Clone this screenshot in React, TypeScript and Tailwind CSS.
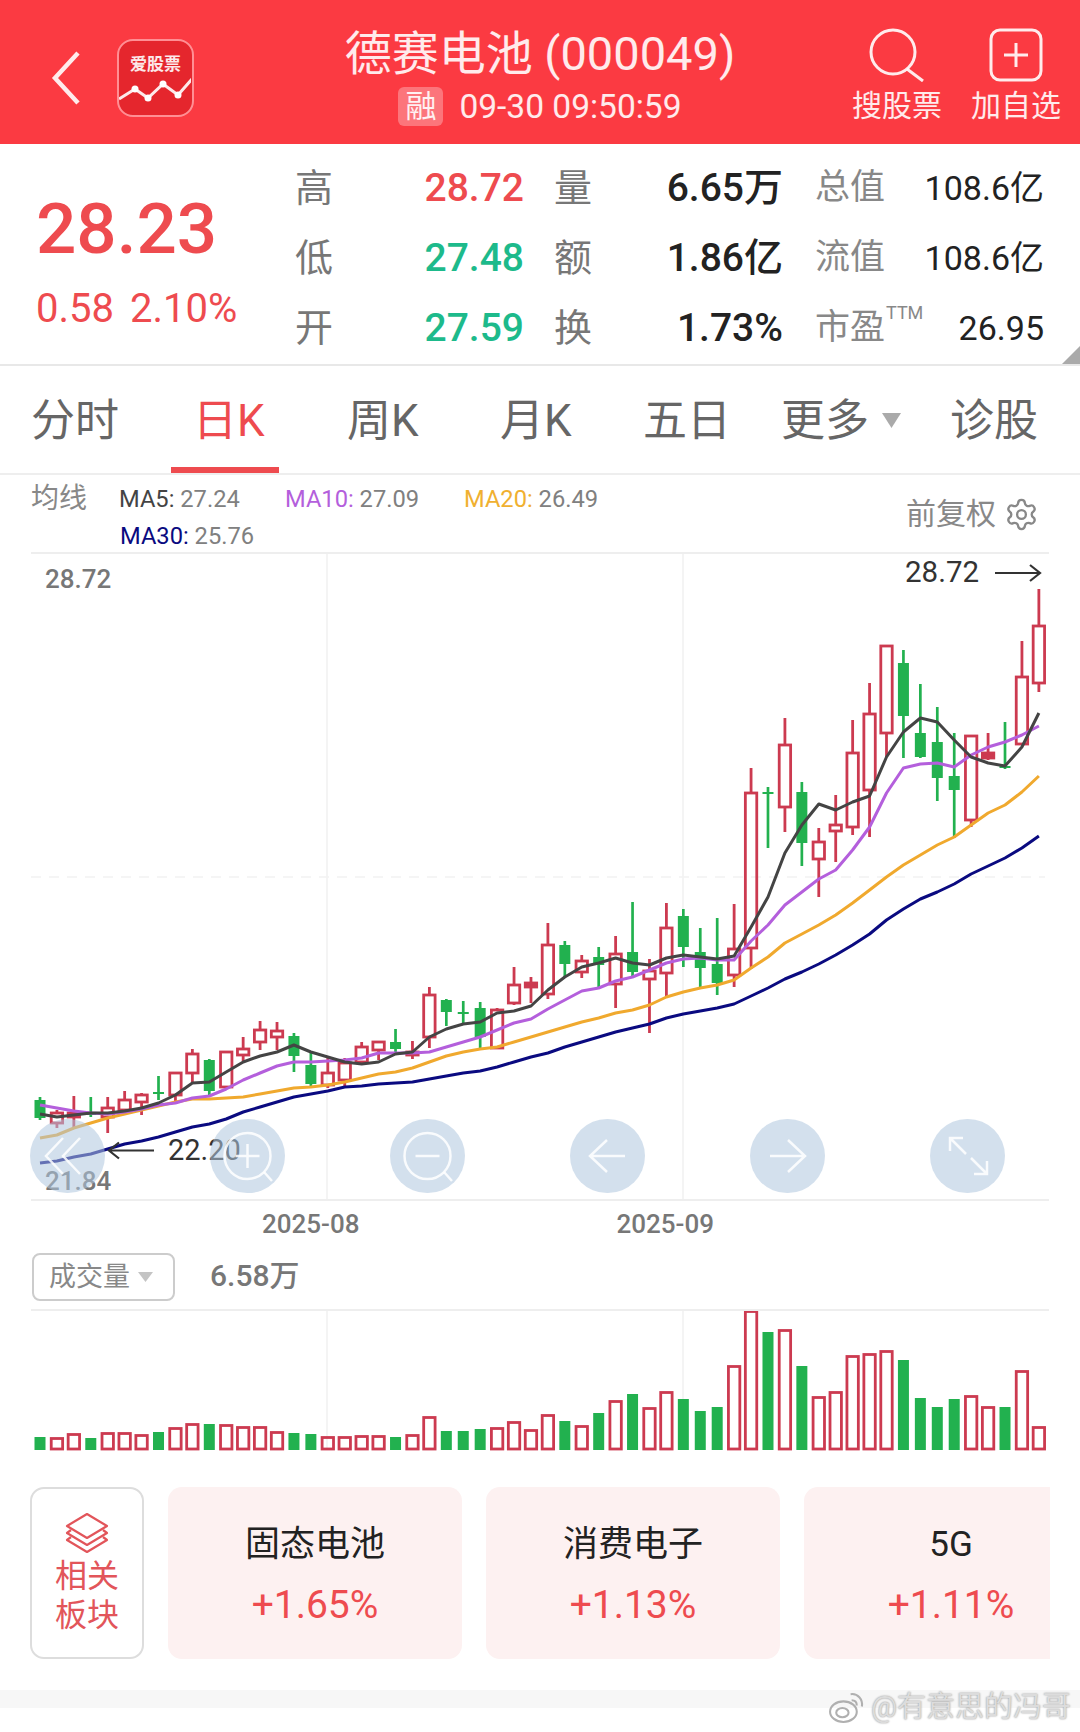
import { Settings } from 'lucide-react';

type Candle = [number, number, number, number];

const RED = '#cc3a50';
const GREEN = '#22b14f';

// [high, bodyTop, bodyBottom, low]
const candles: Candle[] = [
  [1097, 1100, 1118, 1120], [1110, 1113, 1123, 1128], [1096, 1113, 1117, 1128], [1097, 1113, 1114, 1117],
  [1097, 1108, 1117, 1133], [1091, 1100, 1110, 1113], [1093, 1095, 1102, 1115], [1076, 1092, 1093, 1100],
  [1073, 1073, 1095, 1102], [1049, 1054, 1073, 1083], [1059, 1060, 1091, 1095], [1052, 1052, 1087, 1088],
  [1037, 1049, 1055, 1061], [1021, 1030, 1042, 1050], [1022, 1031, 1037, 1050], [1033, 1036, 1056, 1072],
  [1052, 1065, 1084, 1088], [1058, 1073, 1085, 1088], [1058, 1063, 1080, 1087], [1042, 1047, 1062, 1063],
  [1041, 1042, 1050, 1060], [1029, 1042, 1049, 1055], [1041, 1052, 1055, 1059], [987, 995, 1037, 1048],
  [999, 1000, 1012, 1026], [1001, 1012, 1013, 1023], [1002, 1008, 1037, 1048], [1008, 1010, 1048, 1048],
  [967, 985, 1003, 1005], [977, 983, 987, 1003], [923, 945, 994, 999], [941, 945, 964, 977],
  [955, 961, 972, 978], [947, 957, 965, 987], [936, 954, 984, 1008], [902, 952, 972, 977],
  [959, 971, 979, 1033], [903, 928, 973, 996], [909, 916, 947, 967], [928, 952, 968, 989],
  [918, 964, 983, 995], [904, 949, 975, 987], [768, 793, 948, 969], [787, 792, 794, 848],
  [718, 745, 807, 832], [782, 792, 843, 866], [828, 842, 859, 897], [795, 825, 831, 862],
  [720, 753, 827, 835], [683, 714, 790, 837], [646, 646, 733, 757], [650, 663, 716, 758],
  [684, 733, 757, 758], [707, 742, 778, 801], [733, 776, 790, 838], [736, 736, 820, 827],
  [733, 753, 758, 760], [722, 766, 768, 769], [641, 677, 744, 745], [589, 626, 683, 692],
];

// indexes of the falling days, drawn as solid green
const greenDays = new Set([0, 3, 7, 10, 15, 16, 21, 24, 25, 26, 31, 33, 35, 38, 39, 40, 43, 45, 51, 52, 53, 54, 57]);

const ma5 = [
  1114, 1117, 1115, 1113, 1113, 1111, 1108, 1103, 1095, 1083, 1082, 1072, 1062, 1056, 1052, 1045, 1052, 1057, 1062, 1064,
  1062, 1054, 1052, 1037, 1029, 1024, 1022, 1013, 1011, 1006, 990, 977, 967, 963, 958, 963, 965, 958, 955, 957,
  959, 956, 927, 897, 853, 825, 804, 810, 802, 796, 757, 732, 718, 722, 740, 757, 763, 766, 747, 713,
];
const ma10 = [
  1105, 1108, 1111, 1113, 1114, 1112, 1109, 1105, 1103, 1098, 1096, 1089, 1080, 1073, 1066, 1062, 1062, 1061, 1060, 1058,
  1053, 1053, 1053, 1052, 1047, 1042, 1037, 1030, 1023, 1019, 1009, 1000, 991, 988, 981, 977, 970, 963, 959, 958,
  960, 960, 941, 925, 905, 892, 879, 870, 850, 827, 793, 768, 764, 763, 767, 755, 747, 742, 735, 726,
];
const ma20 = [
  1138, 1135, 1128, 1123, 1118, 1114, 1110, 1106, 1102, 1099, 1099, 1098, 1097, 1094, 1091, 1088, 1087, 1085, 1082, 1078,
  1074, 1072, 1068, 1062, 1056, 1052, 1049, 1047, 1042, 1037, 1032, 1027, 1022, 1018, 1013, 1010, 1005, 997, 992, 988,
  985, 980, 968, 957, 943, 934, 925, 915, 903, 890, 877, 865, 855, 845, 837, 825, 813, 805, 792, 776,
];
const ma30 = [
  1163, 1161, 1157, 1154, 1149, 1144, 1141, 1137, 1132, 1127, 1124, 1119, 1112, 1107, 1102, 1097, 1094, 1091, 1087, 1086,
  1084, 1083, 1082, 1079, 1076, 1073, 1071, 1067, 1062, 1057, 1053, 1047, 1042, 1037, 1032, 1028, 1024, 1018, 1014, 1011,
  1008, 1004, 996, 988, 979, 972, 964, 955, 945, 934, 920, 909, 899, 892, 884, 874, 866, 858, 848, 836,
];

// top of each volume bar, they all stand on y=1450
const volumes = [
  1437, 1438, 1434, 1438, 1433, 1433, 1435, 1432, 1428, 1424, 1424, 1425, 1427, 1427, 1432, 1433, 1434, 1437, 1437, 1436,
  1436, 1437, 1435, 1417, 1431, 1431, 1429, 1428, 1422, 1430, 1415, 1421, 1426, 1413, 1401, 1394, 1408, 1392, 1399, 1411,
  1407, 1366, 1311, 1332, 1330, 1366, 1397, 1392, 1356, 1354, 1351, 1360, 1398, 1407, 1399, 1396, 1407, 1407, 1371, 1427,
];

const xAt = (i: number) => 40 + i * 16.93;
const linePoints = (ys: number[]) => ys.map((y, i) => `${xAt(i).toFixed(1)},${y}`).join(' ');

function CandleChart() {
  return (
    <svg className="absolute inset-0" width="1080" height="647" viewBox="0 554 1080 647" fill="none">
      <path d="M327 554V1200M683 554V1200" stroke="#f1f1f1" strokeWidth="1.5" />
      <path d="M31 877H1045" stroke="#f2f2f2" strokeWidth="1.5" strokeDasharray="10 8" />
      {candles.map(([high, top, bottom, low], i) => {
        const x = xAt(i);
        if (greenDays.has(i)) {
          return (
            <g key={i}>
              <path d={`M${x} ${high}V${low}`} stroke={GREEN} strokeWidth="2.7" />
              <rect x={x - 5.5} y={top} width="11" height={Math.max(bottom - top, 2)} fill={GREEN} />
            </g>
          );
        }
        return (
          <g key={i} stroke={RED} strokeWidth="2.8">
            <path d={`M${x} ${high}V${top}M${x} ${bottom}V${low}`} />
            <rect x={x - 5.7} y={top} width="11.4" height={bottom - top} fill={bottom - top < 6 ? RED : 'none'} />
          </g>
        );
      })}
      <polyline points={linePoints(ma30)} stroke="#0a0a80" strokeWidth="3" strokeLinejoin="round" />
      <polyline points={linePoints(ma20)} stroke="#f0a92e" strokeWidth="3" strokeLinejoin="round" />
      <polyline points={linePoints(ma10)} stroke="#b45fdc" strokeWidth="3" strokeLinejoin="round" />
      <polyline points={linePoints(ma5)} stroke="#444444" strokeWidth="3" strokeLinejoin="round" />
      <path d="M995 573H1040M1030 565L1040 573L1030 581" stroke="#333333" strokeWidth="2.2" />
      <path d="M154 1150.5H109M119 1142.5L109 1150.5L119 1158.5" stroke="#333333" strokeWidth="2.2" />
    </svg>
  );
}

function VolumeChart() {
  return (
    <svg className="block" width="1080" height="149" viewBox="0 1311 1080 149" fill="none">
      <path d="M327 1311V1450M683 1311V1450" stroke="#f1f1f1" strokeWidth="1.5" />
      {volumes.map((top, i) => {
        const x = xAt(i);
        return greenDays.has(i) ? (
          <rect key={i} x={x - 5.5} y={top} width="11" height={1450 - top} fill={GREEN} />
        ) : (
          <rect key={i} x={x - 5.7} y={top + 0.5} width="11.4" height={1448.5 - top} stroke={RED} strokeWidth="2.8" />
        );
      })}
    </svg>
  );
}

function ChartButton({ children }: { children: React.ReactNode }) {
  return (
    <div className="w-[75px] h-[74px] rounded-full bg-[#afc6de]/55">
      <svg width="75" height="74" viewBox="0 0 75 74" fill="none" stroke="#ffffff" strokeOpacity="0.85" strokeWidth="2.5">
        {children}
      </svg>
    </div>
  );
}

function AppLogo() {
  return (
    <div className="relative w-[77px] h-[78px] rounded-[16px] border-[2.5px] border-[#ff8f94] bg-[#e5262d] overflow-hidden">
      <span className="absolute left-0 right-0 top-[12px] text-center text-[17px] leading-[22px] font-bold text-white/90">
        爱股票
      </span>
      <svg className="absolute inset-0" width="72" height="73" viewBox="0 0 72 73" fill="none">
        <path d="M0 58L16 48L29 57L44 43L59 54L73 38" stroke="#ffffff" strokeOpacity="0.9" strokeWidth="3" />
        <circle cx="16" cy="48" r="3.5" fill="#ffffff" />
        <circle cx="29" cy="57" r="3.5" fill="#ffffff" />
        <circle cx="44" cy="43" r="3.5" fill="#ffffff" />
        <circle cx="59" cy="54" r="3.5" fill="#ffffff" />
      </svg>
    </div>
  );
}

function Header() {
  return (
    <div className="grid grid-cols-[1fr_auto_1fr] h-[144px] bg-[#fb3a42] text-white/90">
      <div className="flex items-center pt-[11px]">
        <svg className="ml-[50px]" width="32" height="54" viewBox="0 0 32 54" fill="none">
          <path d="M28 2L5 27L28 52" stroke="#ffffff" strokeOpacity="0.9" strokeWidth="4.5" />
        </svg>
        <div className="ml-[35px]">
          <AppLogo />
        </div>
      </div>
      <div className="flex flex-col items-center pt-[24px]">
        <div className="text-[47px] leading-[60px] whitespace-nowrap">德赛电池 (000049)</div>
        <div className="flex items-center mt-[3px]">
          <span className="w-[45px] h-[39px] rounded-[6px] bg-white/30 text-[31px] leading-[39px] text-center">融</span>
          <span className="ml-[16px] text-[33.5px] leading-[39px] whitespace-nowrap">09-30 09:50:59</span>
        </div>
      </div>
      <div className="flex justify-end pr-[19px] pt-[28px]">
        <div className="flex flex-col items-center w-[90px]">
          <svg width="56" height="54" viewBox="0 0 56 54" fill="none" stroke="#ffffff" strokeOpacity="0.9" strokeWidth="3">
            <circle cx="24" cy="24" r="22" />
            <path d="M38 41L54 53" />
          </svg>
          <span className="mt-[8px] text-[30px] leading-[32px] whitespace-nowrap">搜股票</span>
        </div>
        <div className="flex flex-col items-center w-[90px] ml-[29px]">
          <svg width="54" height="54" viewBox="0 0 54 54" fill="none" stroke="#ffffff" strokeOpacity="0.9" strokeWidth="3">
            <rect x="2" y="2" width="50" height="50" rx="9" />
            <path d="M27 15V39M15 27H39" />
          </svg>
          <span className="mt-[8px] text-[30px] leading-[32px] whitespace-nowrap">加自选</span>
        </div>
      </div>
    </div>
  );
}

function StatRow({
  label1, value1, color1, label2, value2, label3, value3, ttm,
}: {
  label1: string; value1: string; color1: string; label2: string; value2: string; label3: string; value3: string; ttm?: boolean;
}) {
  return (
    <div className="flex items-center h-[70px]">
      <div className="flex justify-between items-center w-[229px]">
        <span className="text-[38px] text-[#777777]">{label1}</span>
        <span className={`text-[39px] font-medium ${color1}`}>{value1}</span>
      </div>
      <div className="flex justify-between items-center w-[229px] ml-[30px]">
        <span className="text-[38px] text-[#777777]">{label2}</span>
        <span className="text-[39px] font-medium text-[#222222]">{value2}</span>
      </div>
      <div className="flex justify-between items-center w-[229px] ml-[32px]">
        <span className="relative text-[35px] text-[#888888] whitespace-nowrap">
          {label3}
          {ttm && <sup className="absolute left-[71px] top-[-2px] text-[18px] leading-[26px]">TTM</sup>}
        </span>
        <span className="text-[34px] text-[#222222]">{value3}</span>
      </div>
    </div>
  );
}

function Stats() {
  return (
    <div className="relative flex h-[222px] pt-[9px] border-b-2 border-[#e8e8e8]">
      <div className="w-[295px] pl-[36px] text-[#ee4b4f]">
        <div className="text-[71px] leading-[86px] font-medium mt-[33px]">28.23</div>
        <div className="flex text-[40px] leading-[44px] mt-[15px] whitespace-nowrap">
          <span>0.58</span>
          <span className="ml-[16px]">2.10%</span>
        </div>
      </div>
      <div>
        <StatRow label1="高" value1="28.72" color1="text-[#ee4b4f]" label2="量" value2="6.65万" label3="总值" value3="108.6亿" />
        <StatRow label1="低" value1="27.48" color1="text-[#1dba8b]" label2="额" value2="1.86亿" label3="流值" value3="108.6亿" />
        <StatRow label1="开" value1="27.59" color1="text-[#1dba8b]" label2="换" value2="1.73%" label3="市盈" value3="26.95" ttm />
      </div>
      <svg className="absolute right-0 bottom-0" width="18" height="18" viewBox="0 0 18 18">
        <path d="M18 0V18H0Z" fill="#aaaaaa" />
      </svg>
    </div>
  );
}

function Tabs() {
  return (
    <div className="relative flex items-center h-[109px] pt-[2px] border-b-2 border-[#eeeeee] text-[44px] text-[#666666] whitespace-nowrap">
      <span className="ml-[31px] w-[88px]">分时</span>
      <span className="ml-[74px] w-[69px] text-[#ee4b4f]">日K</span>
      <span className="ml-[85px] w-[74px]">周K</span>
      <span className="ml-[79px] w-[74px]">月K</span>
      <span className="ml-[69px] w-[88px]">五日</span>
      <span className="ml-[50px] w-[88px]">更多</span>
      <svg className="ml-[13px]" width="19" height="15" viewBox="0 0 19 15">
        <path d="M0 0H19L9.5 15Z" fill="#aaaaaa" />
      </svg>
      <span className="ml-[49px] w-[88px]">诊股</span>
      <div className="absolute left-[171px] bottom-0 w-[108px] h-[6px] bg-[#ee4b4f]" />
    </div>
  );
}

function Legend() {
  return (
    <div className="relative flex h-[79px] mx-[31px] pt-[6px] border-b-2 border-[#eeeeee] whitespace-nowrap">
      <span className="w-[88px] text-[28px] leading-[36px] text-[#888888]">均线</span>
      <div className="text-[23.7px] leading-[37px] text-[#808080]">
        <div className="flex">
          <span className="w-[166px]"><span className="text-[#444444]">MA5:</span> 27.24</span>
          <span className="w-[179px]"><span className="text-[#b45fdc]">MA10:</span> 27.09</span>
          <span><span className="text-[#f0b030]">MA20:</span> 26.49</span>
        </div>
        <div className="ml-px"><span className="text-[#0a0a80]">MA30:</span> 25.76</div>
      </div>
      <div className="absolute right-[10px] top-[20px] flex items-center text-[#888888]">
        <span className="text-[30px] leading-[38px]">前复权</span>
        <Settings className="ml-[8px]" size={35} strokeWidth={1.6} />
      </div>
    </div>
  );
}

function PriceChart() {
  return (
    <div className="relative h-[647px]">
      <CandleChart />
      <span className="absolute left-[45px] top-[9px] text-[26px] leading-[32px] font-medium text-[#777777]">28.72</span>
      <span className="absolute left-[45px] top-[611px] text-[26px] leading-[32px] font-medium text-[#777777]">21.84</span>
      <span className="absolute left-[905px] top-[1px] text-[29.5px] leading-[34px] text-[#333333]">28.72</span>
      <span className="absolute left-[168px] top-[579px] text-[29px] leading-[34px] text-[#333333]">22.20</span>
      <div className="absolute left-[30px] top-[565px] flex gap-[105px]">
        <ChartButton>
          <path d="M33 19L16 37L33 55M50 19L33 37L50 55" />
        </ChartButton>
        <ChartButton>
          <circle cx="37.5" cy="37" r="23" />
          <path d="M54 53L62 62M37.5 25V49M25.5 37H49.5" />
        </ChartButton>
        <ChartButton>
          <circle cx="37.5" cy="37" r="23" />
          <path d="M54 53L62 62M25.5 37H49.5" />
        </ChartButton>
        <ChartButton>
          <path d="M55 37H21M37 21L20 37L37 53" />
        </ChartButton>
        <ChartButton>
          <path d="M20 37H54M38 21L55 37L38 53" />
        </ChartButton>
        <ChartButton>
          <path d="M20 32V19H33M20 19L36 35M57 42V55H44M57 55L41 39" />
        </ChartButton>
      </div>
      <div className="absolute left-[31px] right-[31px] bottom-0 h-[2px] bg-[#eeeeee]" />
    </div>
  );
}

function VolumeHeader() {
  return (
    <>
      <div className="flex items-start h-[52px] pt-[8px] text-[26px] leading-[30px] font-medium text-[#777777]">
        <span className="ml-[262px]">2025-08</span>
        <span className="ml-[257px]">2025-09</span>
      </div>
      <div className="flex items-start h-[58px] mx-[31px] border-b-2 border-[#eeeeee]">
        <div className="flex items-center ml-px w-[143px] h-[48px] pl-[15px] rounded-[8px] border-2 border-[#cccccc] text-[27px] text-[#888888]">
          成交量
          <svg className="ml-[8px]" width="15" height="10" viewBox="0 0 15 10">
            <path d="M0 0H15L7.5 10Z" fill="#c4c4c4" />
          </svg>
        </div>
        <span className="ml-[35px] text-[30px] leading-[45px] font-medium text-[#777777]">6.58万</span>
      </div>
    </>
  );
}

const sectors = [
  { name: '固态电池', pct: '+1.65%' },
  { name: '消费电子', pct: '+1.13%' },
  { name: '5G', pct: '+1.11%' },
];

function Sectors() {
  return (
    <div className="flex h-[172px] ml-[30px] mt-[27px] w-[1020px] overflow-hidden">
      <div className="flex flex-col items-center shrink-0 w-[114px] pt-[23px] rounded-[14px] border-2 border-[#dddddd] text-[#e2555a]">
        <svg width="46" height="42" viewBox="0 0 46 42" fill="none" stroke="#e2555a" strokeWidth="2.2" strokeLinejoin="round">
          <path d="M23 2L43 14L23 26L3 14Z" />
          <path d="M7 18L3 21L23 33L43 21L39 18" />
          <path d="M7 25L3 28L23 40L43 28L39 25" />
        </svg>
        <div className="text-[32px] leading-[39px] text-center mt-[3px]">相关<br />板块</div>
      </div>
      {sectors.map(s => (
        <div key={s.name} className="flex flex-col items-center shrink-0 w-[294px] ml-[24px] pt-[36px] rounded-[14px] bg-[#fdf1f1]">
          <span className="text-[35px] leading-[44px] text-[#222222]">{s.name}</span>
          <span className="mt-[16px] text-[39px] leading-[44px] text-[#ee4b4f]">{s.pct}</span>
        </div>
      ))}
    </div>
  );
}

function Watermark() {
  return (
    <div className="absolute right-[9px] top-[1687px] flex items-center text-[29px] leading-[40px] text-[#dcdcdc] [text-shadow:0_0_2px_#8a8a8a] whitespace-nowrap">
      <svg width="37" height="34" viewBox="0 0 36 33" fill="none" stroke="#b0b0b0" strokeWidth="2">
        <ellipse cx="15" cy="21" rx="13" ry="10" />
        <ellipse cx="14" cy="22" rx="6" ry="4.5" />
        <path d="M22 4C29 3 34 9 33 16M23 10C26 10 28 12 28 15" />
      </svg>
      <span className="ml-[6px]">@有意思的冯哥</span>
    </div>
  );
}

export default function App() {
  return (
    <div className="relative w-[1080px] h-[1732px] overflow-hidden bg-white font-[family-name:Roboto,'Noto_Sans_CJK_SC',sans-serif]">
      <Header />
      <Stats />
      <Tabs />
      <Legend />
      <PriceChart />
      <VolumeHeader />
      <VolumeChart />
      <Sectors />
      <div className="mt-[31px] h-[18px] bg-[#f7f7f7]" />
      <Watermark />
    </div>
  );
}
